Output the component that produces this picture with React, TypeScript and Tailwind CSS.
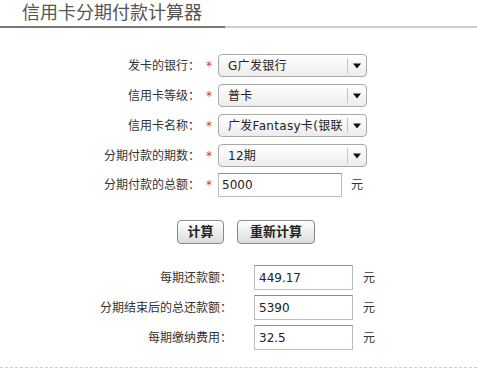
import React from 'react';

const font = { fontFamily: '"DejaVu Sans", "Noto Sans CJK SC", sans-serif' };

const Arrow = () => (
  <svg width="8" height="6" viewBox="0 0 8 6">
    <path d="M0 0.5 H8 L4 5.5 Z" fill="#111" />
  </svg>
);

const Star = () => <span className="w-[18px] text-center text-[12px] text-[#cc3a3a]">*</span>;

const Select = ({ value }: { value: string }) => (
  <div className="flex h-[23px] w-[149px] items-stretch rounded-[4px] border border-[#a9a9a9] bg-gradient-to-b from-white to-[#ececec]">
    <div className="flex w-[128px] items-center overflow-hidden whitespace-nowrap pl-[9px] text-[12px] tracking-[0.3px] text-[#222]">
      {value}
    </div>
    <div className="my-[3px] w-px bg-[#c4c4c4]" />
    <div className="flex flex-1 items-center justify-center">
      <Arrow />
    </div>
  </div>
);

const Row = ({ label, children }: { label: string; children: React.ReactNode }) => (
  <div className="flex items-center">
    <div className="w-[200px] text-right text-[12px] text-[#333]">{label}</div>
    <Star />
    {children}
  </div>
);

const Result = ({ label, value }: { label: string; value: string }) => (
  <div className="flex h-[25px] items-center">
    <div className="w-[232px] text-right text-[12px] text-[#333]">{label}</div>
    <div className="ml-[22px] flex h-[25px] w-[99px] items-center border border-[#bdbdbd] border-t-[#8f8f8f] pl-[4px] text-[12px] text-[#222]">
      {value}
    </div>
    <span className="ml-[10px] text-[12px] text-[#333]">元</span>
  </div>
);

const Btn = ({ children, w }: { children: React.ReactNode; w: string }) => (
  <button
    className={`${w} h-[24px] rounded-[4px] border border-[#8a8a8a] bg-gradient-to-b from-white to-[#dcdcdc] text-[13px] font-bold text-[#222]`}
  >
    {children}
  </button>
);

export default function App() {
  return (
    <div className="relative h-[370px] w-[477px] overflow-hidden bg-white" style={font}>
      <div className="flex h-[26px] items-center pl-[22px] text-[18px] leading-none text-[#555]">
        信用卡分期付款计算器
      </div>
      <div className="flex h-[2px]">
        <div className="w-[225px] bg-[#7a7a7a]" />
        <div className="flex-1 bg-[#cfcfcf]" />
      </div>

      <div className="mt-[26px] flex flex-col gap-[7px]">
        <Row label="发卡的银行：">
          <Select value="G广发银行" />
        </Row>
        <Row label="信用卡等级：">
          <Select value="普卡" />
        </Row>
        <Row label="信用卡名称：">
          <Select value="广发Fantasy卡(银联" />
        </Row>
        <Row label="分期付款的期数：">
          <Select value="12期" />
        </Row>
      </div>

      <div className="mt-[6px]">
        <Row label="分期付款的总额：">
          <div className="flex h-[24px] w-[124px] items-center border border-[#bdbdbd] border-t-[#8f8f8f] pl-[3px] text-[12px] text-[#222]">
            5000
          </div>
          <span className="ml-[9px] text-[12px] text-[#333]">元</span>
        </Row>
      </div>

      <div className="mt-[23px] flex gap-[13px] pl-[177px]">
        <Btn w="w-[47px]">计算</Btn>
        <Btn w="w-[78px]">重新计算</Btn>
      </div>

      <div className="mt-[21px] flex flex-col gap-[5px]">
        <Result label="每期还款额：" value="449.17" />
        <Result label="分期结束后的总还款额：" value="5390" />
        <Result label="每期缴纳费用：" value="32.5" />
      </div>

      <div className="mt-[17px] border-t border-dashed border-[#cccccc]" />
    </div>
  );
}
